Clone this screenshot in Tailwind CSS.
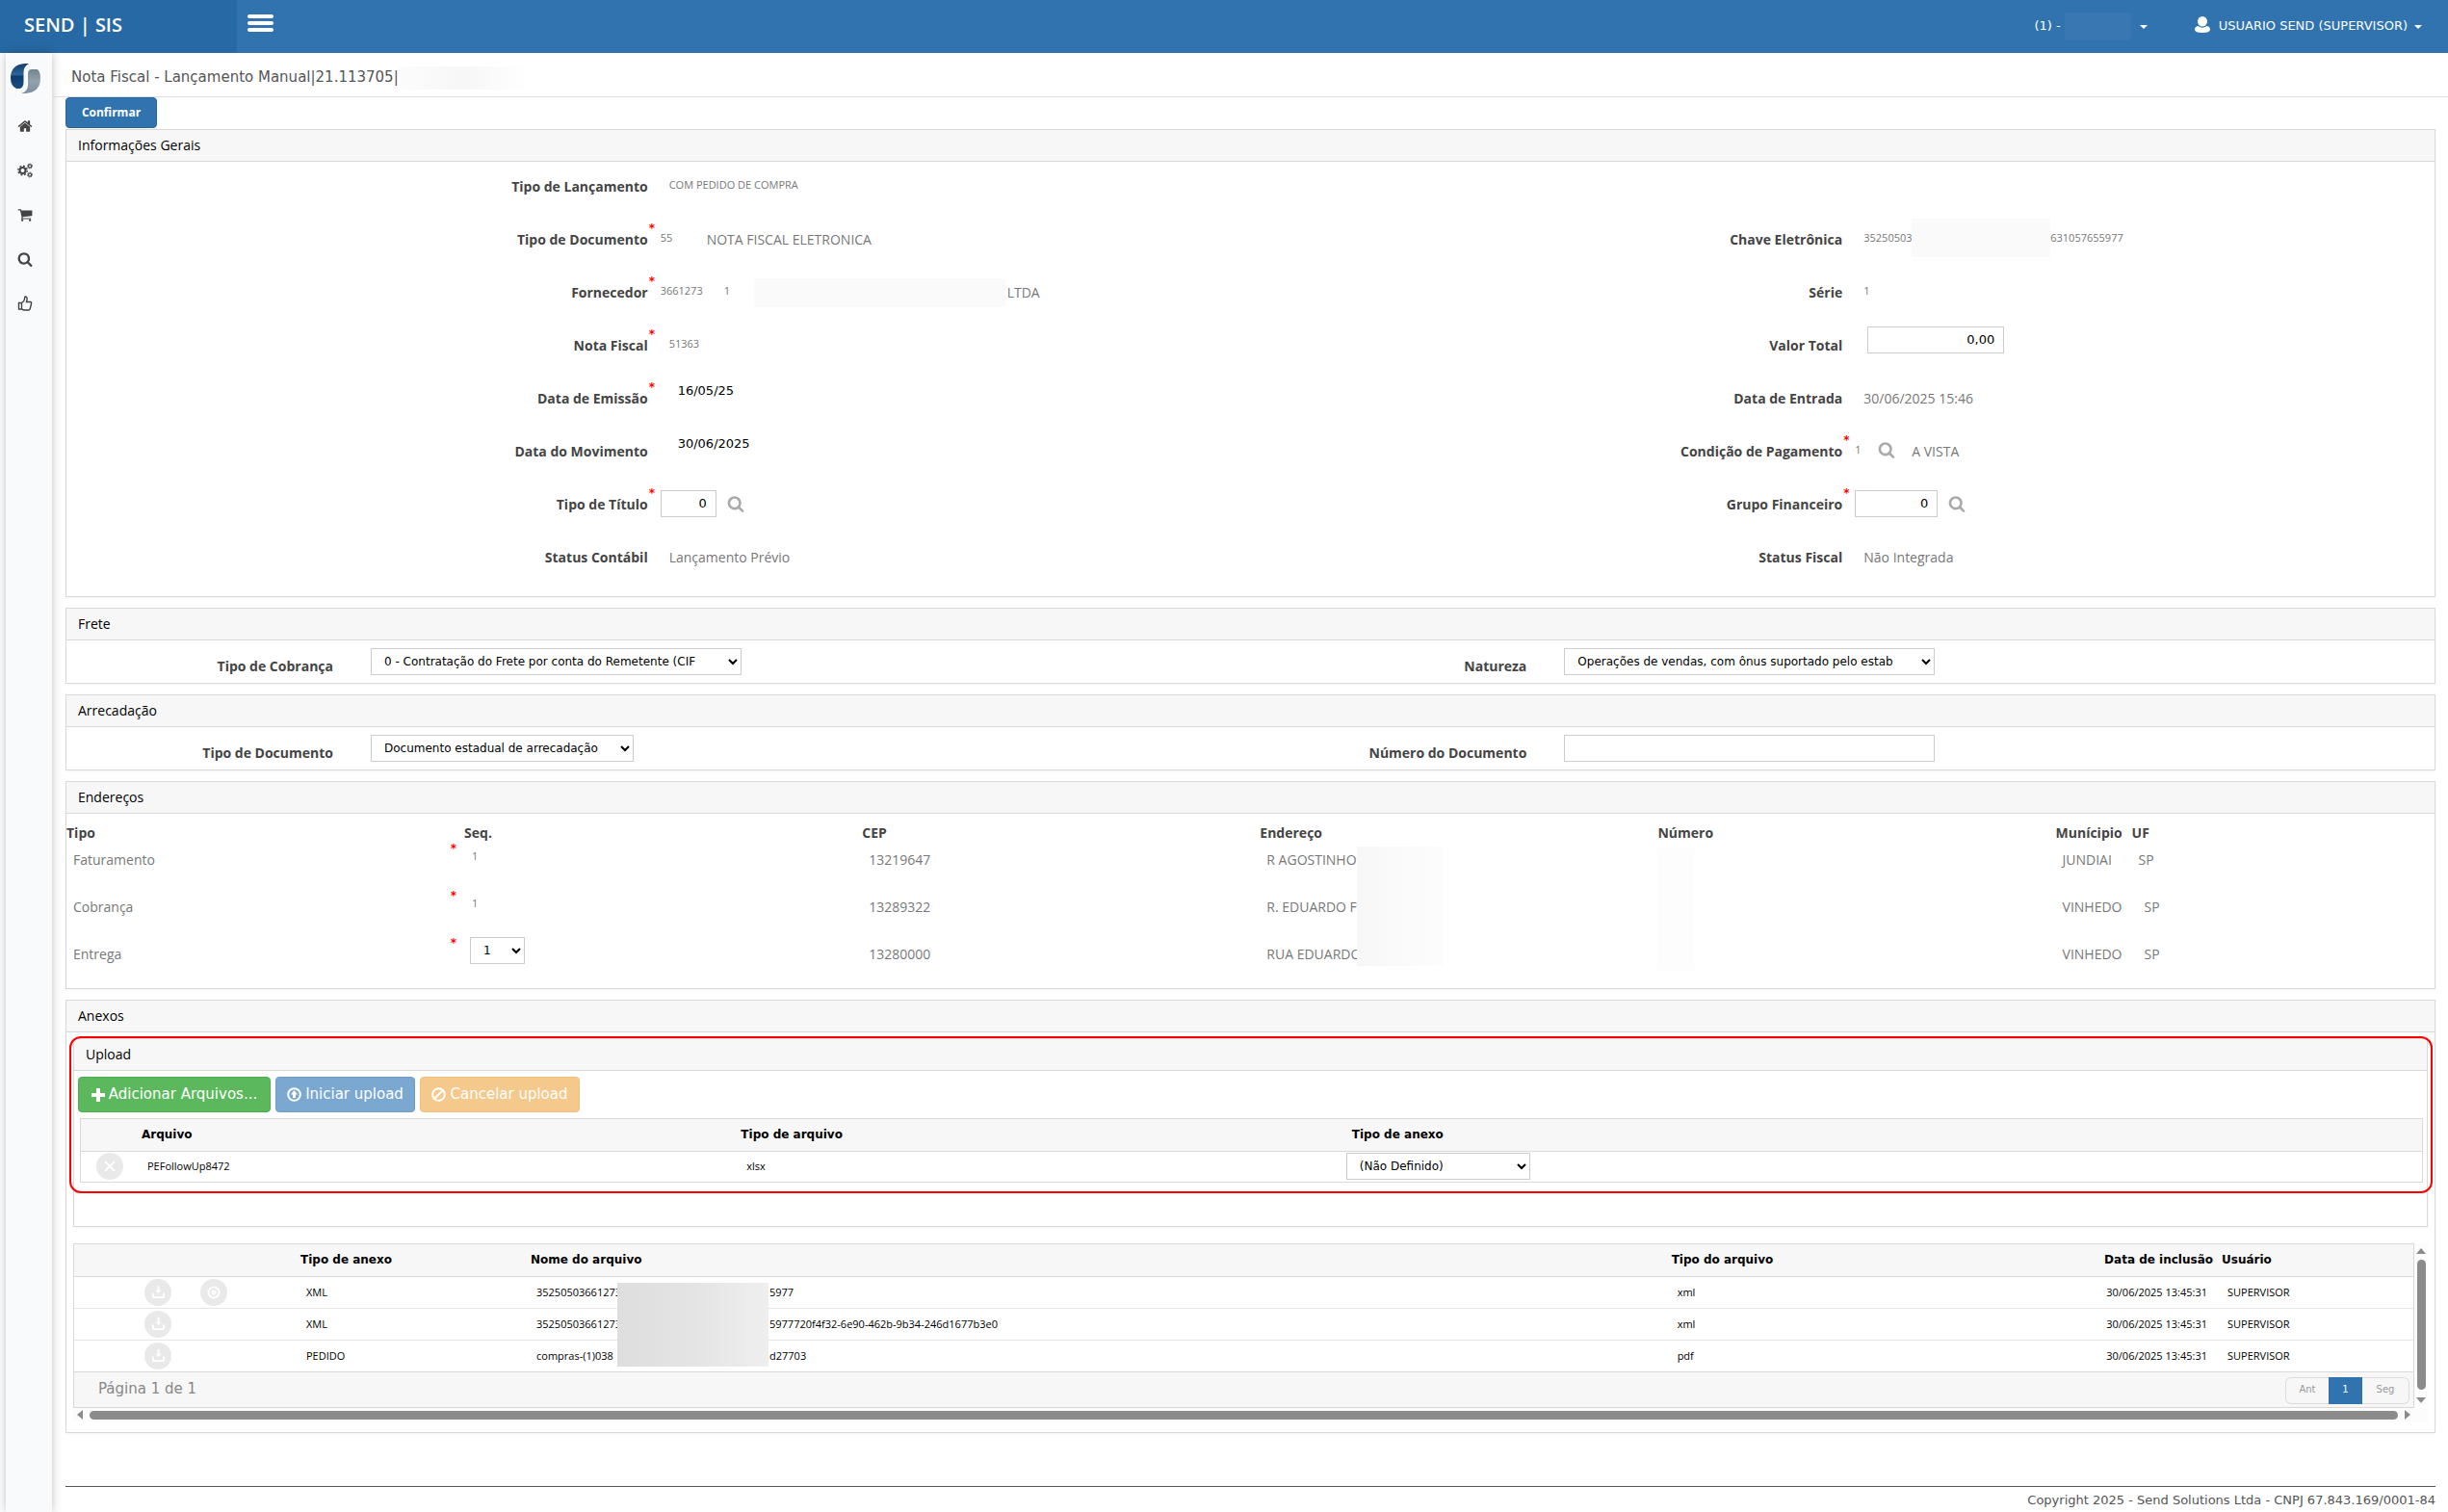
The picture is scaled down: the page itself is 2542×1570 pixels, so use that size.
<!DOCTYPE html>
<html lang="pt-BR">
<head>
  <meta charset="UTF-8" />
  <title>SEND | SIS - Nota Fiscal</title>
  <script src="https://cdn.jsdelivr.net/npm/@tailwindcss/browser@4"></script>
</head>
<body class="bg-white min-h-screen flex flex-col font-['Open_Sans',sans-serif] text-sm text-[#777]">

  <!-- Icons used more than once -->
  <svg class="hidden">
    <symbol id="i-search" viewBox="0 0 1792 1792">
      <path d="M1216 832q0-185-131.5-316.5t-316.5-131.5-316.5 131.5-131.5 316.5 131.5 316.5 316.5 131.5 316.5-131.5 131.5-316.5zm512 832q0 52-38 90t-90 38q-54 0-90-38l-343-342q-179 124-399 124-143 0-273.5-55.5t-225-150-150-225-55.5-273.5 55.5-273.5 150-225 225-150 273.5-55.5 273.5 55.5 225 150 150 225 55.5 273.5q0 220-124 399l343 343q37 37 37 90z"/>
    </symbol>
    <symbol id="i-download" viewBox="0 0 16 16">
      <path d="M7 1h2v5h2.500L8 9.500 4.500 6H7z"/>
      <path d="M2 9v4q0 1 1 1h10q1 0 1-1V9" fill="none" stroke="currentColor" stroke-width="2"/>
    </symbol>
    <symbol id="i-caret" viewBox="0 0 8 4"><path d="M0 0h8L4 4z"/></symbol>
  </svg>

  <!-- Top bar -->
  <header class="h-[55px] flex bg-[#3073af] text-white font-['DejaVu_Sans',sans-serif] text-[13px]">
    <a href="#" class="w-[246px] bg-[#2769a4] pl-[25px] flex items-center font-['Open_Sans',sans-serif] text-xl font-semibold pb-1">SEND | SIS</a>
    <button type="button" aria-label="Menu" class="w-[27px] ml-[11px] mt-[15px] h-[18px] flex flex-col justify-between">
      <span class="block h-1 w-full bg-white rounded-xs"></span>
      <span class="block h-1 w-full bg-white rounded-xs"></span>
      <span class="block h-1 w-full bg-white rounded-xs"></span>
    </button>
    <div class="ml-auto flex items-center pr-[27px]">
      <a href="#" class="flex items-center">
        <span>(1) -</span>
        <span class="w-[69px] h-[29px] ml-1 bg-[#3877b1]"></span>
        <svg class="w-2 h-1 ml-[9px] fill-current"><use href="#i-caret"/></svg>
      </a>
      <a href="#" class="flex items-center ml-[49px]">
        <svg class="w-4 h-[17px] mr-[9px] mb-1 fill-current" viewBox="0 0 16 17"><ellipse cx="8" cy="5.300" rx="5" ry="5.300"/><path d="M0 13.500q0-3 3.500-3.500Q8 13.500 12.500 10q3.500.5 3.500 3.500 0 3.500-8 3.500t-8-3.500z"/></svg>
        <span>USUARIO SEND (SUPERVISOR)</span>
        <svg class="w-2 h-1 ml-[7px] fill-current"><use href="#i-caret"/></svg>
      </a>
    </div>
  </header>

  <div class="flex flex-1">
    <!-- Side menu -->
    <nav class="w-12 ml-[6px] shrink-0 bg-[#f9fafc] shadow-[0_0_10px_rgba(0,0,0,0.25)] pt-[11px] pr-2 flex flex-col items-center text-[#444]">
      <a href="#" aria-label="Send" class="block">
        <svg class="w-[31px] h-[31px]" viewBox="0 0 31 31">
          <defs>
            <linearGradient id="blue" x1="0" y1="0" x2="0" y2="1"><stop offset="0" stop-color="#123f6d"/><stop offset=".45" stop-color="#2d659a"/><stop offset=".5" stop-color="#0d3d6e"/><stop offset="1" stop-color="#1a4d80"/></linearGradient>
            <linearGradient id="gray" x1="0" y1="0" x2="0" y2="1"><stop offset="0" stop-color="#73838f"/><stop offset=".5" stop-color="#93a3ae"/><stop offset="1" stop-color="#7d8d99"/></linearGradient>
          </defs>
          <path d="M19 0Q13.500 3 13.500 9v10q0 6-4 7H6Q0 23 0 15 0 1 15 0z" fill="url(#blue)"/>
          <path d="M11 31q7-2 7-9V11q0-5 4-5h6q3 3 3 9 0 15-16 16z" fill="url(#gray)"/>
        </svg>
      </a>
      <div class="mt-[26px] flex flex-col gap-[30px]">
        <a href="#" aria-label="Início">
          <svg class="w-4 h-4 fill-current" viewBox="0 0 1792 1792"><path d="M1472 992v480q0 26-19 45t-45 19h-384v-384h-256v384h-384q-26 0-45-19t-19-45v-480q0-1 .5-3t.5-3l575-474 575 474q1 2 1 6zm223-69l-62 74q-8 9-21 11h-3q-13 0-21-7l-692-577-692 577q-12 8-24 7-13-2-21-11l-62-74q-8-10-7-23.500t11-21.500l719-599q32-26 76-26t76 26l244 204v-195q0-14 9-23t23-9h192q14 0 23 9t9 23v408l219 182q10 8 11 21.500t-7 23.500z"/></svg>
        </a>
        <a href="#" aria-label="Configurações">
          <svg class="w-4 h-4" viewBox="0 0 16 16" fill="none" stroke="currentColor">
            <circle cx="5.500" cy="8" r="3" stroke-width="2"/><circle cx="5.500" cy="8" r="4.700" stroke-width="1.500" stroke-dasharray="1.900 1.790"/>
            <circle cx="13" cy="3.500" r="1.600" stroke-width="1.200"/><circle cx="13" cy="3.500" r="2.500" stroke-dasharray="1 .96"/>
            <circle cx="13" cy="12.500" r="1.600" stroke-width="1.200"/><circle cx="13" cy="12.500" r="2.500" stroke-dasharray="1 .96"/>
          </svg>
        </a>
        <a href="#" aria-label="Compras">
          <svg class="w-4 h-4 fill-current" viewBox="0 0 1792 1792"><path d="M704 1536q0 52-38 90t-90 38-90-38-38-90 38-90 90-38 90 38 38 90zm896 0q0 52-38 90t-90 38-90-38-38-90 38-90 90-38 90 38 38 90zm128-1088v512q0 24-16.500 42.500t-40.500 21.500l-1044 122q13 60 13 70 0 16-24 64h920q26 0 45 19t19 45-19 45-45 19h-1024q-26 0-45-19t-19-45q0-11 8-31.500t16-36 21.500-40 15.500-29.500l-177-823h-204q-26 0-45-19t-19-45 19-45 45-19h256q16 0 28.500 6.500t19.500 15.500 13 24.500 8 26 5.500 29.500 4.500 26h1201q26 0 45 19t19 45z"/></svg>
        </a>
        <a href="#" aria-label="Pesquisar">
          <svg class="w-4 h-4 fill-current"><use href="#i-search"/></svg>
        </a>
        <a href="#" aria-label="Aprovar">
          <svg class="w-4 h-4" viewBox="0 0 16 16" fill="none" stroke="currentColor" stroke-width="1.400"><path d="M1.500 7.500h3v6.500h-3zM4.500 7.500Q7.500 5.500 7.500 3.500 7.500 1 8.500 1q2 .3 1.500 3.500L9.500 6.500h4q1.500.3 1 2l-1.200 5q-.3 1.500-1.800 1.500H8q-2-.2-3.500-1.200"/></svg>
        </a>
      </div>
    </nav>

    <div class="flex-1 min-w-0 flex flex-col">
      <h1 class="h-[46px] border-b border-[#ddd] pl-5 pt-[6px] flex items-center font-['DejaVu_Sans',sans-serif] text-[15px] text-[#555]">
        Nota Fiscal - Lançamento Manual|21.113705|
        <span class="w-[135px] h-6 bg-linear-to-r from-[#fcfcfc] via-[#f7f7f7] to-white"></span>
      </h1>

      <main class="pl-[14px] pr-[13px] flex-1 flex flex-col">
        <button type="button" class="w-[95px] h-8 mb-px bg-[#3073af] border border-[#2a6496] rounded-sm text-white text-xs font-bold">Confirmar</button>

        <!-- Informações gerais -->
        <section class="border border-[#d9d9d9] shadow-xs">
          <h2 class="h-[33px] pl-3 flex items-center bg-[#f7f7f7] border-b border-[#d9d9d9] text-black">Informações Gerais</h2>
          <div class="grid grid-cols-2 pb-[11px]">
            <div>
              <div class="h-[55px] pb-1 flex items-center">
                <span class="w-[49.1%] text-right font-bold text-[#444]">Tipo de Lançamento</span>
                <span class="pl-[22px] pb-1 text-[11px]">COM PEDIDO DE COMPRA</span>
              </div>
              <div class="h-[55px] pb-1 flex items-center">
                <span class="w-[49.1%] text-right font-bold text-[#444]">Tipo de Documento</span>
                <span class="w-[13px] pl-px mt-2 self-start text-[#f00] font-bold text-xs leading-3 font-['DejaVu_Sans',sans-serif]">*</span>
                <span class="w-12 pb-1 text-[11px]">55</span>
                <span>NOTA FISCAL ELETRONICA</span>
              </div>
              <div class="h-[55px] pb-1 flex items-center">
                <span class="w-[49.1%] text-right font-bold text-[#444]">Fornecedor</span>
                <span class="w-[13px] pl-px mt-2 self-start text-[#f00] font-bold text-xs leading-3 font-['DejaVu_Sans',sans-serif]">*</span>
                <span class="w-[66px] pb-1 text-[11px]">3661273</span>
                <span class="w-[31px] pb-1 text-[11px]">1</span>
                <span class="w-[261px] h-[30px] mr-[2px] bg-[#fafafa]"></span>
                <span>LTDA</span>
              </div>
              <div class="h-[55px] pb-1 flex items-center">
                <span class="w-[49.1%] text-right font-bold text-[#444]">Nota Fiscal</span>
                <span class="w-[22px] pl-px mt-2 self-start text-[#f00] font-bold text-xs leading-3 font-['DejaVu_Sans',sans-serif]">*</span>
                <span class="pb-1 text-[11px]">51363</span>
              </div>
              <div class="h-[55px] pb-1 flex items-center">
                <span class="w-[49.1%] text-right font-bold text-[#444]">Data de Emissão</span>
                <span class="w-[31px] pl-px mt-2 self-start text-[#f00] font-bold text-xs leading-3 font-['DejaVu_Sans',sans-serif]">*</span>
                <span class="pb-[14px] text-[13px] text-black font-['DejaVu_Sans',sans-serif]">16/05/25</span>
              </div>
              <div class="h-[55px] pb-1 flex items-center">
                <span class="w-[49.1%] text-right font-bold text-[#444]">Data do Movimento</span>
                <span class="pl-[31px] pb-[14px] text-[13px] text-black font-['DejaVu_Sans',sans-serif]">30/06/2025</span>
              </div>
              <div class="h-[55px] pb-1 flex items-center">
                <label for="tipoTitulo" class="w-[49.1%] text-right font-bold text-[#444]">Tipo de Título</label>
                <span class="w-[13px] pl-px mt-2 self-start text-[#f00] font-bold text-xs leading-3 font-['DejaVu_Sans',sans-serif]">*</span>
                <input type="text" id="tipoTitulo" value="0" class="w-[58px] h-7 mb-[2px] border border-[#ccc] pr-[9px] text-right text-[13px] text-black font-['DejaVu_Sans',sans-serif]" />
                <button type="button" aria-label="Buscar tipo de título" class="ml-[11px] mb-[2px] text-[#aaa]"><svg class="w-[18px] h-[18px] fill-current"><use href="#i-search"/></svg></button>
              </div>
              <div class="h-[55px] pb-1 flex items-center">
                <span class="w-[49.1%] text-right font-bold text-[#444]">Status Contábil</span>
                <span class="pl-[22px]">Lançamento Prévio</span>
              </div>
            </div>

            <div class="pt-[55px]">
              <div class="h-[55px] pb-1 flex items-center">
                <span class="w-1/2 text-right font-bold text-[#444]">Chave Eletrônica</span>
                <span class="w-[72px] pl-[22px] pb-1 text-[11px]">352505036</span>
                <span class="relative w-36 h-10 mb-1 bg-[#fafafa]"></span>
                <span class="pb-1 text-[11px]">631057655977</span>
              </div>
              <div class="h-[55px] pb-1 flex items-center">
                <span class="w-1/2 text-right font-bold text-[#444]">Série</span>
                <span class="pl-[22px] pb-1 text-[11px]">1</span>
              </div>
              <div class="h-[55px] pb-1 flex items-center">
                <label for="valorTotal" class="w-1/2 text-right font-bold text-[#444]">Valor Total</label>
                <input type="text" id="valorTotal" value="0,00" class="w-[142px] h-7 ml-[26px] mb-3 border border-[#ccc] pr-[9px] text-right text-[13px] text-black font-['DejaVu_Sans',sans-serif]" />
              </div>
              <div class="h-[55px] pb-1 flex items-center">
                <span class="w-1/2 text-right font-bold text-[#444]">Data de Entrada</span>
                <span class="pl-[22px]">30/06/2025 15:46</span>
              </div>
              <div class="h-[55px] pb-1 flex items-center">
                <span class="w-1/2 text-right font-bold text-[#444]">Condição de Pagamento</span>
                <span class="w-[13px] pl-px mt-2 self-start text-[#f00] font-bold text-xs leading-3 font-['DejaVu_Sans',sans-serif]">*</span>
                <span class="w-6 pb-1 text-[11px]">1</span>
                <button type="button" aria-label="Buscar condição" class="mb-1 mr-[17px] text-[#aaa]"><svg class="w-[18px] h-[18px] fill-current"><use href="#i-search"/></svg></button>
                <span>A VISTA</span>
              </div>
              <div class="h-[55px] pb-1 flex items-center">
                <label for="grupoFinanceiro" class="w-1/2 text-right font-bold text-[#444]">Grupo Financeiro</label>
                <span class="w-[13px] pl-px mt-2 self-start text-[#f00] font-bold text-xs leading-3 font-['DejaVu_Sans',sans-serif]">*</span>
                <input type="text" id="grupoFinanceiro" value="0" class="w-[86px] h-7 mb-[2px] border border-[#ccc] pr-[9px] text-right text-[13px] text-black font-['DejaVu_Sans',sans-serif]" />
                <button type="button" aria-label="Buscar grupo financeiro" class="ml-[11px] mb-[2px] text-[#aaa]"><svg class="w-[18px] h-[18px] fill-current"><use href="#i-search"/></svg></button>
              </div>
              <div class="h-[55px] pb-1 flex items-center">
                <span class="w-1/2 text-right font-bold text-[#444]">Status Fiscal</span>
                <span class="pl-[22px]">Não Integrada</span>
              </div>
            </div>
          </div>
        </section>

        <!-- Frete -->
        <section class="border border-[#d9d9d9] shadow-xs mt-[11px]">
          <h2 class="h-[33px] pl-3 flex items-center bg-[#f7f7f7] border-b border-[#d9d9d9] text-black">Frete</h2>
          <div class="h-11 flex items-center">
            <div class="w-[50.4%] flex items-center">
              <label for="tipoCobranca" class="w-[277px] pt-[10px] text-right font-bold text-[#444]">Tipo de Cobrança</label>
              <select id="tipoCobranca" class="w-[385px] h-7 ml-[39px] px-[9px] border border-[#ccc] text-xs text-black font-['DejaVu_Sans',sans-serif]"><option>0 - Contratação do Frete por conta do Remetente (CIF</option></select>
            </div>
            <div class="flex items-center">
              <label for="natureza" class="w-[277px] pt-[10px] text-right font-bold text-[#444]">Natureza</label>
              <select id="natureza" class="w-[385px] h-7 ml-[39px] px-[9px] border border-[#ccc] text-xs text-black font-['DejaVu_Sans',sans-serif]"><option>Operações de vendas, com ônus suportado pelo estab</option></select>
            </div>
          </div>
        </section>

        <!-- Arrecadação -->
        <section class="border border-[#d9d9d9] shadow-xs mt-[11px]">
          <h2 class="h-[33px] pl-3 flex items-center bg-[#f7f7f7] border-b border-[#d9d9d9] text-black">Arrecadação</h2>
          <div class="h-11 flex items-center">
            <div class="w-[50.4%] flex items-center">
              <label for="tipoDocumento" class="w-[277px] pt-[10px] text-right font-bold text-[#444]">Tipo de Documento</label>
              <select id="tipoDocumento" class="w-[273px] h-7 ml-[39px] px-[9px] border border-[#ccc] text-xs text-black font-['DejaVu_Sans',sans-serif]"><option>Documento estadual de arrecadação</option></select>
            </div>
            <div class="flex items-center">
              <label for="numeroDocumento" class="w-[277px] pt-[10px] text-right font-bold text-[#444]">Número do Documento</label>
              <input type="text" id="numeroDocumento" class="w-[385px] h-7 ml-[39px] px-[9px] border border-[#ccc] text-xs text-black" />
            </div>
          </div>
        </section>

        <!-- Endereços -->
        <section class="border border-[#d9d9d9] shadow-xs mt-[11px]">
          <h2 class="h-[33px] pl-3 flex items-center bg-[#f7f7f7] border-b border-[#d9d9d9] text-black">Endereços</h2>
          <div class="relative">
            <table class="w-full table-fixed text-left">
              <thead>
                <tr class="h-[34px] align-top text-[#444] leading-5">
                  <th class="w-[16.8%] pt-[10px]">Tipo</th>
                  <th class="w-[16.8%] pt-[10px]">Seq.</th>
                  <th class="w-[16.8%] pt-[10px]">CEP</th>
                  <th class="w-[16.8%] pt-[10px]">Endereço</th>
                  <th class="w-[16.8%] pt-[10px]">Número</th>
                  <th class="w-[79px] pt-[10px]">Munícipio</th>
                  <th class="pt-[10px]">UF</th>
                </tr>
              </thead>
              <tbody class="align-top leading-7">
                <tr class="h-[49px]">
                  <td><div class="flex justify-between pl-[7px] pr-2"><span>Faturamento</span><span class="-mt-1 text-[#f00] font-bold text-xs leading-3 font-['DejaVu_Sans',sans-serif]">*</span></div></td>
                  <td class="pl-2 text-[11px] leading-5">1</td>
                  <td class="pl-[7px]">13219647</td>
                  <td class="pl-[7px]">R AGOSTINHO</td>
                  <td></td>
                  <td class="pl-[7px]">JUNDIAI</td>
                  <td class="pl-[7px]">SP</td>
                </tr>
                <tr class="h-[49px]">
                  <td><div class="flex justify-between pl-[7px] pr-2"><span>Cobrança</span><span class="-mt-1 text-[#f00] font-bold text-xs leading-3 font-['DejaVu_Sans',sans-serif]">*</span></div></td>
                  <td class="pl-2 text-[11px] leading-5">1</td>
                  <td class="pl-[7px]">13289322</td>
                  <td class="pl-[7px]">R. EDUARDO F</td>
                  <td></td>
                  <td class="pl-[7px]">VINHEDO</td>
                  <td class="pl-[13px]">SP</td>
                </tr>
                <tr class="h-[49px]">
                  <td><div class="flex justify-between pl-[7px] pr-2"><span>Entrega</span><span class="-mt-1 text-[#f00] font-bold text-xs leading-3 font-['DejaVu_Sans',sans-serif]">*</span></div></td>
                  <td class="pl-[6px]"><select aria-label="Sequência de entrega" class="block -mt-1 w-[57px] h-7 px-[9px] border border-[#ccc] text-xs text-black font-['DejaVu_Sans',sans-serif]"><option>1</option></select></td>
                  <td class="pl-[7px]">13280000</td>
                  <td class="pl-[7px]">RUA EDUARDO</td>
                  <td></td>
                  <td class="pl-[7px]">VINHEDO</td>
                  <td class="pl-[13px]">SP</td>
                </tr>
              </tbody>
            </table>
            <div class="absolute left-[54.5%] top-[34px] w-[90px] h-[124px] bg-linear-to-r from-[#f7f7f7] to-[#fdfdfd]"></div>
            <div class="absolute left-[67.2%] top-9 w-[38px] h-[126px] bg-[#fdfdfd]"></div>
          </div>
        </section>

        <!-- Anexos -->
        <section class="border border-[#d9d9d9] shadow-xs mt-[11px] pb-[10px]">
          <h2 class="h-[33px] pl-3 flex items-center bg-[#f7f7f7] border-b border-[#d9d9d9] text-black">Anexos</h2>

          <div class="relative mt-[6px] mx-[7px] border border-[#d9d9d9] shadow-xs pb-[45px]">
            <h3 class="h-[33px] pl-3 flex items-center bg-[#f7f7f7] border-b border-[#d9d9d9] text-black">Upload</h3>
            <div class="mt-[6px] ml-1 flex gap-[5px] text-[15px] text-white font-['DejaVu_Sans',sans-serif]">
              <button type="button" class="h-[37px] w-[200px] flex items-center justify-center gap-1 bg-[#5cb85c] border border-[#4cae4c] rounded-sm">
                <svg class="w-[14px] h-[14px] fill-current" viewBox="0 0 14 14"><path d="M5 0h4v5h5v4H9v5H5V9H0V5h5z"/></svg>
                Adicionar Arquivos...
              </button>
              <button type="button" disabled class="h-[37px] w-[145px] flex items-center justify-center gap-1 bg-[#7ba8d0] border border-[#6f9dc6] rounded-sm">
                <svg class="w-[15px] h-[15px]" viewBox="0 0 15 15"><circle cx="7.500" cy="7.500" r="6.300" fill="none" stroke="currentColor" stroke-width="2"/><path d="M7.500 3L11 7.500H9V11H6V7.500H4z" fill="currentColor"/></svg>
                Iniciar upload
              </button>
              <button type="button" disabled class="h-[37px] w-[166px] flex items-center justify-center gap-1 bg-[#f5c88c] border border-[#f3c07c] rounded-sm">
                <svg class="w-[15px] h-[15px]" viewBox="0 0 15 15" fill="none" stroke="currentColor" stroke-width="2"><circle cx="7.500" cy="7.500" r="6.300"/><path d="M3.200 11.800l8.600-8.600"/></svg>
                Cancelar upload
              </button>
            </div>
            <div class="mt-[6px] ml-[6px] mr-1 border border-[#d9d9d9]">
              <table class="w-full table-fixed text-left text-[11px] text-black">
                <thead class="bg-[#f7f7f7] text-xs font-['DejaVu_Sans',sans-serif]">
                  <tr class="h-[33px] border-b border-[#d9d9d9]">
                    <th class="w-[57px]"></th>
                    <th class="w-[25.6%] pl-[6px]">Arquivo</th>
                    <th class="w-[26.1%] pl-[6px]">Tipo de arquivo</th>
                    <th class="pl-[6px]">Tipo de anexo</th>
                  </tr>
                </thead>
                <tbody>
                  <tr class="h-8">
                    <td><button type="button" aria-label="Remover" class="w-7 h-7 ml-4 rounded-full bg-[#e9e9e9] text-white flex items-center justify-center"><svg class="w-3 h-3" viewBox="0 0 12 12" fill="none" stroke="currentColor" stroke-width="2"><path d="M1 1l10 10M11 1L1 11"/></svg></button></td>
                    <td class="pl-3">PEFollowUp8472</td>
                    <td class="pl-3">xlsx</td>
                    <td><select aria-label="Tipo de anexo" class="block w-[191px] h-7 px-[9px] border border-[#ccc] text-xs font-['DejaVu_Sans',sans-serif]"><option>(Não Definido)</option></select></td>
                  </tr>
                </tbody>
              </table>
            </div>
            <div class="absolute -top-[3px] -left-[5px] -right-[6px] h-[163px] border-2 border-[#f00] rounded-xl pointer-events-none"></div>
          </div>

          <!-- Scrolling list of attachments -->
          <div class="mt-[17px] mx-[7px] grid grid-cols-[1fr_14px]">
            <div class="relative border border-[#d9d9d9]">
              <table class="w-full table-fixed text-left text-[11px] text-black">
                <thead class="bg-[#f7f7f7] text-xs font-['DejaVu_Sans',sans-serif]">
                  <tr class="h-[33px] border-b border-[#d9d9d9]">
                    <th class="w-[229px]"></th>
                    <th class="w-[239px] pl-[6px]">Tipo de anexo</th>
                    <th class="pl-[6px]">Nome do arquivo</th>
                    <th class="w-[18.500%] pl-[6px]">Tipo do arquivo</th>
                    <th class="w-[122px] pr-[3px] text-right whitespace-nowrap">Data de inclusão</th>
                    <th class="w-[205px] pl-[6px]">Usuário</th>
                  </tr>
                </thead>
                <tbody>
                  <tr class="h-[33px] border-b border-[#e5e5e5]">
                    <td><div class="flex gap-[30px] pl-[73px] text-white">
                      <button type="button" aria-label="Baixar" class="w-7 h-7 rounded-full bg-[#e9e9e9] flex items-center justify-center"><svg class="w-[15px] h-[15px] fill-current"><use href="#i-download"/></svg></button>
                      <button type="button" aria-label="Visualizar" class="w-7 h-7 rounded-full bg-[#e9e9e9] flex items-center justify-center"><svg class="w-[14px] h-[14px]" viewBox="0 0 14 14"><circle cx="7" cy="7" r="5.500" fill="none" stroke="currentColor" stroke-width="2"/><circle cx="7" cy="7" r="2.500" fill="currentColor"/></svg></button>
                    </div></td>
                    <td class="pl-3">XML</td>
                    <td class="pl-3"><div class="flex whitespace-nowrap"><span class="w-[84px]">35250503661273</span><span class="ml-[158px]">5977</span></div></td>
                    <td class="pl-3">xml</td>
                    <td class="pr-[9px] text-right whitespace-nowrap">30/06/2025 13:45:31</td>
                    <td class="pl-3">SUPERVISOR</td>
                  </tr>
                  <tr class="h-[33px] border-b border-[#e5e5e5]">
                    <td><div class="pl-[73px] text-white">
                      <button type="button" aria-label="Baixar" class="w-7 h-7 rounded-full bg-[#e9e9e9] flex items-center justify-center"><svg class="w-[15px] h-[15px] fill-current"><use href="#i-download"/></svg></button>
                    </div></td>
                    <td class="pl-3">XML</td>
                    <td class="pl-3"><div class="flex whitespace-nowrap"><span class="w-[84px]">35250503661273</span><span class="ml-[158px]">5977720f4f32-6e90-462b-9b34-246d1677b3e0</span></div></td>
                    <td class="pl-3">xml</td>
                    <td class="pr-[9px] text-right whitespace-nowrap">30/06/2025 13:45:31</td>
                    <td class="pl-3">SUPERVISOR</td>
                  </tr>
                  <tr class="h-[33px] border-b border-[#d9d9d9]">
                    <td><div class="pl-[73px] text-white">
                      <button type="button" aria-label="Baixar" class="w-7 h-7 rounded-full bg-[#e9e9e9] flex items-center justify-center"><svg class="w-[15px] h-[15px] fill-current"><use href="#i-download"/></svg></button>
                    </div></td>
                    <td class="pl-3">PEDIDO</td>
                    <td class="pl-3"><div class="flex whitespace-nowrap"><span class="w-[84px]">compras-(1)038</span><span class="ml-[158px]">d27703</span></div></td>
                    <td class="pl-3">pdf</td>
                    <td class="pr-[9px] text-right whitespace-nowrap">30/06/2025 13:45:31</td>
                    <td class="pl-3">SUPERVISOR</td>
                  </tr>
                </tbody>
              </table>
              <div class="absolute left-[564px] top-10 w-[157px] h-[87px] bg-linear-to-r from-[#dedede] via-[#e4e4e4] to-[#efefef]"></div>

              <div class="h-9 pl-[25px] pr-1 flex items-center justify-between bg-[#f7f7f7] font-['DejaVu_Sans',sans-serif] text-[15px] text-[#888]">
                <span>Página 1 de 1</span>
                <div class="flex h-7 text-[10px] mt-[2px]">
                  <button type="button" disabled class="w-[45px] border border-r-0 border-[#ddd] rounded-l-md text-[#999]">Ant</button>
                  <button type="button" class="w-[35px] bg-[#3073af] text-white">1</button>
                  <button type="button" disabled class="w-[49px] border border-l-0 border-[#ddd] rounded-r-md text-[#999]">Seg</button>
                </div>
              </div>
            </div>
            <!-- vertical scroll bar -->
            <div class="bg-[#fcfcfc] py-[5px] flex flex-col items-center justify-between">
              <svg class="w-[10px] h-[6px] fill-[#8b8b8b]" viewBox="0 0 10 6"><path d="M5 0l5 6H0z"/></svg>
              <div class="w-[9px] flex-1 mt-[6px] mb-2 rounded-full bg-[#8b8b8b]"></div>
              <svg class="w-[10px] h-[6px] fill-[#8b8b8b]" viewBox="0 0 10 6"><path d="M0 0h10L5 6z"/></svg>
            </div>
            <!-- horizontal scroll bar -->
            <div class="bg-[#fcfcfc] h-[15px] px-1 flex items-center">
              <svg class="w-[6px] h-[10px] fill-[#8b8b8b]" viewBox="0 0 6 10"><path d="M6 0v10L0 5z"/></svg>
              <div class="h-[9px] flex-1 mx-[7px] rounded-full bg-[#8b8b8b]"></div>
              <svg class="w-[6px] h-[10px] fill-[#8b8b8b]" viewBox="0 0 6 10"><path d="M0 0l6 5-6 5z"/></svg>
            </div>
            <div class="bg-[#fcfcfc]"></div>
          </div>
        </section>

        <footer class="mt-auto h-[27px] border-t border-[#555] text-right leading-7 text-[13px] text-[#555] font-['DejaVu_Sans',sans-serif]">
          Copyright 2025 - Send Solutions Ltda - CNPJ 67.843.169/0001-84
        </footer>
      </main>
    </div>
  </div>
</body>
</html>
